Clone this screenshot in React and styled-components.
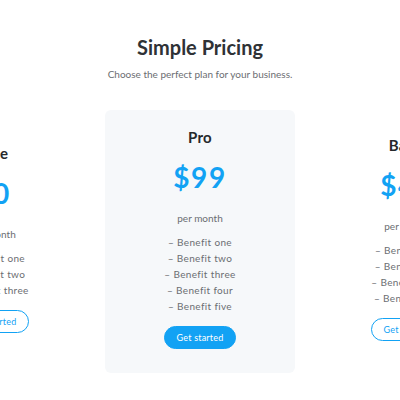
import React from "react";
import styled, { createGlobalStyle } from "styled-components";

const Global = createGlobalStyle`
  html, body { margin: 0; padding: 0; background: #ffffff; }
  body { font-family: "Lato", "Noto Sans", sans-serif; overflow: hidden; width: 400px; height: 400px; }
`;

const Page = styled.main`
  width: 400px;
  height: 400px;
  display: flex;
  flex-direction: column;
  align-items: center;
  padding-top: 35px;
  box-sizing: border-box;
  overflow: hidden;
`;

const Title = styled.h1`
  margin: 0;
  font-size: 20px;
  line-height: 24px;
  font-weight: 700;
  color: #2f3236;
`;

const Subtitle = styled.p`
  margin: 8px 0 0;
  font-size: 10px;
  line-height: 14px;
  color: #6b6e72;
`;

const Plans = styled.section`
  margin-top: 29px;
  width: 400px;
  display: flex;
  justify-content: center;
  align-items: center;
  gap: 17px;
`;

const Card = styled.article`
  flex: 0 0 190px;
  box-sizing: border-box;
  padding: 17px 0 24px;
  border-radius: 6px;
  background: ${(p) => (p.$featured ? "#f6f8fa" : "#ffffff")};
  display: flex;
  flex-direction: column;
  align-items: center;
`;

const PlanName = styled.h2`
  margin: 0;
  font-size: 15px;
  line-height: 20px;
  font-weight: 700;
  color: #26292c;
  letter-spacing: 0.3px;
`;

const Price = styled.div`
  margin-top: 14px;
  font-size: 28px;
  line-height: 32px;
  font-weight: 700;
  color: #12a2f4;
  letter-spacing: 1.6px;
`;

const Period = styled.div`
  margin-top: 18px;
  font-size: 10px;
  line-height: 14px;
  color: #6b6e72;
`;

const Benefits = styled.ul`
  list-style: none;
  margin: 9px 0 0;
  padding: 0;
  text-align: center;
`;

const Benefit = styled.li`
  font-size: 10px;
  line-height: 16px;
  color: #6b6e72;
  letter-spacing: 0.35px;
`;

const Button = styled.button`
  margin-top: 12px;
  width: 72px;
  height: 23px;
  border-radius: 12px;
  font-family: inherit;
  font-size: 9px;
  letter-spacing: 0.2px;
  cursor: pointer;
  box-sizing: border-box;
  border: 1px solid #12a2f4;
  background: ${(p) => (p.$solid ? "#12a2f4" : "#ffffff")};
  color: ${(p) => (p.$solid ? "#ffffff" : "#12a2f4")};
`;

const plans = [
  { name: "Free", price: "$0", benefits: ["one", "two", "three"] },
  { name: "Pro", price: "$99", featured: true, benefits: ["one", "two", "three", "four", "five"] },
  { name: "Basic", price: "$49", benefits: ["one", "two", "three", "four"] },
];

export default function App() {
  return (
    <>
      <Global />
      <Page>
        <Title>Simple Pricing</Title>
        <Subtitle>Choose the perfect plan for your business.</Subtitle>
        <Plans>
          {plans.map((p) => (
            <Card key={p.name} $featured={p.featured}>
              <PlanName>{p.name}</PlanName>
              <Price>{p.price}</Price>
              <Period>per month</Period>
              <Benefits>
                {p.benefits.map((b) => (
                  <Benefit key={b}>– Benefit {b}</Benefit>
                ))}
              </Benefits>
              <Button $solid={p.featured}>Get started</Button>
            </Card>
          ))}
        </Plans>
      </Page>
    </>
  );
}
